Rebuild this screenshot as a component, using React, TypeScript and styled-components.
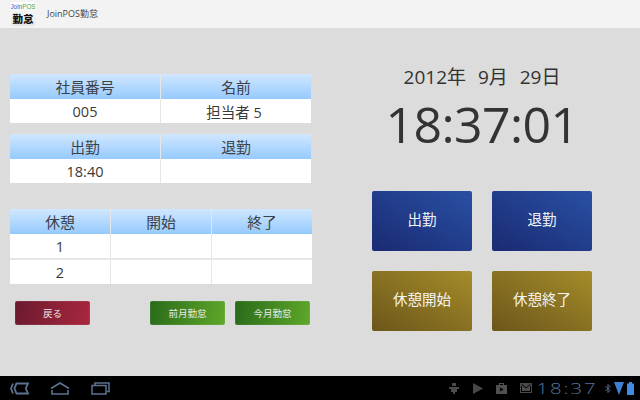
import React from "react";
import styled, { createGlobalStyle } from "styled-components";

const Global = createGlobalStyle`
  html, body { margin: 0; padding: 0; background: #dcdcdc; }
  body { font-family: "Open Sans", "Noto Sans CJK JP", sans-serif; color: #333; }
`;
const Page = styled.div`
  width: 640px; height: 400px; display: flex; flex-direction: column; overflow: hidden;
  background: #dcdcdc;
`;
const TopBar = styled.header`
  height: 28px; background: #f3f3f3; display: flex; align-items: center; padding-left: 11px; gap: 12px; flex: none;
`;
const Logo = styled.div`
  width: 24px; height: 24px; border-radius: 2px; background: linear-gradient(#fff, #e6e6e6);
  display: flex; flex-direction: column; align-items: center; overflow: hidden;
`;
const LogoTop = styled.div`
  font: 400 6.4px/10px "Liberation Sans", sans-serif; color: #4aa84f; white-space: nowrap;
  span { color: #3563c4; }
`;
const LogoMain = styled.div`
  font: 900 10.5px/12px "Noto Sans CJK JP", sans-serif; color: #111; white-space: nowrap; margin-top: 1px;
`;
const AppTitle = styled.div`
  font-size: 9px; color: #444; line-height: 28px;
`;
const Main = styled.main`
  flex: 1; display: flex; min-height: 0;
`;
const Left = styled.section`
  width: 340px; flex: none; padding: 46px 0 0 10px; box-sizing: border-box; display: flex; flex-direction: column;
`;
const Table = styled.div<{ $cols: number; $w: number; $mb: number }>`
  display: grid; grid-template-columns: repeat(${(p) => p.$cols}, 1fr); column-gap: 1px;
  width: ${(p) => p.$w}px; margin-bottom: ${(p) => p.$mb}px; background: #e6e6e6; border-radius: 2px 2px 0 0;
`;
const Head = styled.div`
  height: 25px; box-sizing: border-box; background: linear-gradient(#d0e7ff, #95cafd); border-radius: 2px 2px 0 0;
  display: flex; align-items: center; justify-content: center; font-size: 14.8px; color: #3c4148; padding-bottom: 1px;
`;
const Cell = styled.div<{ $gap?: boolean }>`
  height: 24px; margin-top: ${(p) => (p.$gap ? 2 : 0)}px; background: #fff; display: flex; align-items: center; justify-content: center; font-size: 14.5px; color: #3a3a3a;
`;
const Actions = styled.div`
  display: flex; padding-left: 5px;
`;
const Small = styled.button<{ $tone: "red" | "green"; $ml?: number }>`
  width: 75px; height: 24px; border: none; padding: 0 0 1px; border-radius: 2px; color: #ececec; font: 9.5px "Open Sans", "Noto Sans CJK JP", sans-serif;
  margin-left: ${(p) => p.$ml ?? 0}px;
  background: ${(p) => (p.$tone === "red" ? "linear-gradient(100deg, #6b1a2e, #a9273f)" : "linear-gradient(100deg, #2a6a1a, #5ea82a)")};
  box-shadow: inset 0 0 0 0.5px rgba(255,255,255,.15);
`;
const Right = styled.section`
  flex: 1; display: flex; flex-direction: column; align-items: flex-start; padding: 36px 0 0 32px; box-sizing: border-box;
`;
const Clock = styled.div`
  width: 220px; display: flex; flex-direction: column; align-items: center; margin-bottom: 33px;
`;
const DateLine = styled.div`
  font-size: 19px; line-height: 26px; white-space: pre; color: #333; word-spacing: 1px;
`;
const Time = styled.div`
  font-size: 50px; line-height: 68px; color: #333; letter-spacing: -0.6px;
`;
const Grid = styled.div`
  display: grid; grid-template-columns: 100px 100px; grid-auto-rows: 60px; gap: 20px; 
`;
const Big = styled.button<{ $tone: "blue" | "gold" }>`
  border: none; padding: 0 0 5px; border-radius: 2px; color: #f4f4f4; font: 14.5px "Open Sans", "Noto Sans CJK JP", sans-serif;
  background: ${(p) => (p.$tone === "blue" ? "linear-gradient(30deg, #1a2a72, #2950a4)" : "linear-gradient(30deg, #6b561a, #a58c2a)")};
`;
const NavBar = styled.footer`
  height: 24px; background: #000; flex: none; display: flex; align-items: center; padding-left: 10px;
`;
const NavIcons = styled.div`
  display: flex; align-items: center; gap: 21px; 
`;
const Status = styled.div`
  margin-left: auto; display: flex; align-items: center; padding-right: 6px; 
`;
const StatusTime = styled.div`
  font: 300 15px/20px "Open Sans", sans-serif; color: #56769f; letter-spacing: 1.5px; transform: scaleX(1.35); width: 60px; text-align: center; margin: 0 8px 0 5px;
`;
const StatusIcons = styled.div<{ $gap: number }>`
  display: flex; align-items: center; gap: ${(p) => p.$gap}px; 
`;

const Back = () => (
  <svg width="19" height="13" viewBox="0 0 19 13" fill="none" stroke="#5d7293" strokeWidth="1.8">
    <path d="M6.5 1.5 H18 L15.8 6.5 L18 11.5 H6.5 L4.5 6.5 Z M3 1.5 L1 6.5 L3 11.5" />
  </svg>
);
const Home = () => (
  <svg width="20" height="13" viewBox="0 0 20 13" fill="none" stroke="#5d7293" strokeWidth="1.6">
    <path d="M1 6.5 L10 1 L19 6.5" /><path d="M2 8 V12 H18 V8" />
  </svg>
);
const Recent = () => (
  <svg width="19" height="13" viewBox="0 0 19 13" fill="none" stroke="#5d7293" strokeWidth="1.5">
    <rect x="1" y="3.5" width="14" height="8.5" /><path d="M4 3 V1 H18 V9.5 H15.5" />
  </svg>
);
const Usb = () => (
  <svg width="12" height="12" viewBox="0 0 12 12" fill="#4a4a4a"><path d="M4 1h4v3h-4zM1 5h10v2h-10zM3 7h6v3h-6zM5 10h2v2h-2z" /></svg>
);
const Play = () => (
  <svg width="10" height="11" viewBox="0 0 10 11" fill="#484848"><path d="M0 0 L10 5.5 L0 11z" /></svg>
);
const Bag = () => (
  <svg width="11" height="12" viewBox="0 0 11 12" fill="#505050"><path d="M0 3h3V1h5v2h3v9H0z" /><path d="M4 2h3v1H4z" fill="#000" /><path d="M4 5.5l3.5 2-3.5 2z" fill="#000" /></svg>
);
const Mail = () => (
  <svg width="12" height="10" viewBox="0 0 12 10" fill="#4a4a4a"><path d="M0 0h12v10H0z" /><path d="M1.5 1.2L6 5l4.5-3.8M1.5 9V3M10.5 9V3M1.5 8.5h9" stroke="#000" strokeWidth="1" fill="none" /></svg>
);
const Bt = () => (
  <svg width="6" height="11" viewBox="0 0 6 11" fill="none" stroke="#5a6a80" strokeWidth="1"><path d="M0.5 3 L5 7.5 L3 9.5 V1.5 L5 3.5 L0.5 8" /></svg>
);
const Wifi = () => (
  <svg width="10" height="13" viewBox="0 0 10 13" fill="#3f7fd0"><path d="M0 0h10L5 13z" /></svg>
);
const Batt = () => (
  <svg width="7" height="13" viewBox="0 0 7 13" fill="#3f8ce0"><path d="M2 0h3v1.5h2V13H0V1.5h2z" /></svg>
);

export default function App() {
  return (
    <Page>
      <Global />
      <TopBar>
        <Logo>
          <LogoTop><span>Join</span>POS</LogoTop>
          <LogoMain>勤怠</LogoMain>
        </Logo>
        <AppTitle>JoinPOS勤怠</AppTitle>
      </TopBar>
      <Main>
        <Left>
          <Table $cols={2} $w={301} $mb={11}>
            <Head>社員番号</Head><Head>名前</Head>
            <Cell>005</Cell><Cell>{"担当者 5\u00a0"}</Cell>
          </Table>
          <Table $cols={2} $w={301} $mb={26}>
            <Head>出勤</Head><Head>退勤</Head>
            <Cell>18:40</Cell><Cell />
          </Table>
          <Table $cols={3} $w={302} $mb={17}>
            <Head>休憩</Head><Head>開始</Head><Head>終了</Head>
            <Cell>1</Cell><Cell /><Cell />
            <Cell $gap>2</Cell><Cell $gap /><Cell $gap />
          </Table>
          <Actions>
            <Small $tone="red">戻る</Small>
            <Small $tone="green" $ml={60}>前月勤怠</Small>
            <Small $tone="green" $ml={10}>今月勤怠</Small>
          </Actions>
        </Left>
        <Right>
          <Clock>
            <DateLine>{"2012年  9月  29日"}</DateLine>
            <Time>18:37:01</Time>
          </Clock>
          <Grid>
            <Big $tone="blue">出勤</Big>
            <Big $tone="blue">退勤</Big>
            <Big $tone="gold">休憩開始</Big>
            <Big $tone="gold">休憩終了</Big>
          </Grid>
        </Right>
      </Main>
      <NavBar>
        <NavIcons><Back /><Home /><Recent /></NavIcons>
        <Status>
          <StatusIcons $gap={13}><Usb /><Play /><Bag /><Mail /></StatusIcons>
          <StatusTime>18:37</StatusTime>
          <StatusIcons $gap={3}><Bt /><Wifi /><Batt /></StatusIcons>
        </Status>
      </NavBar>
    </Page>
  );
}
